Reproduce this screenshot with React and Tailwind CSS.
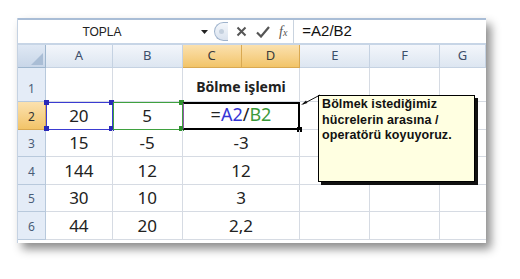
const cols = [
  { key: 'A', w: 'w-[67px]' },
  { key: 'B', w: 'w-[70px]' },
  { key: 'C', w: 'w-[59px]', sel: true },
  { key: 'D', w: 'w-[59px]', sel: true },
  { key: 'E', w: 'w-[70px]' },
  { key: 'F', w: 'w-[70px]' },
  { key: 'G', w: 'w-[46px]' },
];

const rows = [
  { n: 1, h: 'h-[34px]', a: '', b: '', c: 'Bölme işlemi', head: true },
  { n: 2, h: 'h-[28px]', a: '20', b: '5', c: 'formula', sel: true },
  { n: 3, h: 'h-[27px]', a: '15', b: '-5', c: '-3' },
  { n: 4, h: 'h-[28px]', a: '144', b: '12', c: '12' },
  { n: 5, h: 'h-[27px]', a: '30', b: '10', c: '3' },
  { n: 6, h: 'h-[28px]', a: '44', b: '20', c: '2,2' },
];

const cellFont = { fontFamily: '"Noto Sans", "Open Sans", sans-serif' };

function Handle({ className }) {
  return <span className={`absolute w-[5px] h-[5px] ${className}`} />;
}

function FormulaBar() {
  return (
    <div className="flex h-[25px] bg-white border-t-2 border-[#a9bdd6] items-center">
      <div className="w-[180px] h-full flex items-center justify-center text-[12px] text-[#222] pr-[12px]" style={{ fontFamily: '"Liberation Sans", sans-serif' }}>
        TOPLA
      </div>
      <div className="w-[12px] flex justify-center">
        <svg width="7" height="4" viewBox="0 0 7 4"><path d="M0 0h7L3.5 4z" fill="#222" /></svg>
      </div>
      <div className="w-[14px] h-[19px] ml-[4px] rounded-l-full border border-r-0 border-[#9fb3cc] bg-gradient-to-b from-[#f4f7fb] to-[#d9e2ee] flex items-center pl-[4px]">
        <span className="w-[5px] h-[5px] rounded-full bg-[#c4d0de]" />
      </div>
      <div className="flex items-center gap-[9px] ml-[8px] text-[#444]">
        <svg width="11" height="11" viewBox="0 0 11 11"><path d="M1.5 1.5l8 8M9.5 1.5l-8 8" stroke="#555" strokeWidth="2" /></svg>
        <svg width="14" height="12" viewBox="0 0 14 12"><path d="M1 6.5l4 4L13 1" stroke="#555" strokeWidth="2.2" fill="none" /></svg>
        <span className="italic text-[14px] text-[#555]" style={{ fontFamily: '"Liberation Serif", serif' }}>
          f<span className="text-[10px]">x</span>
        </span>
      </div>
      <div className="w-px h-full bg-[#c9d3df] ml-[6px]" />
      <div className="pl-[8px] text-[15px] text-[#111]" style={{ fontFamily: '"Liberation Sans", sans-serif' }}>
        =A2/B2
      </div>
    </div>
  );
}

function HeaderRow() {
  return (
    <div className="flex h-[25px] border-t-2 border-[#c7d5e6]">
      <div className="w-[28px] h-full bg-gradient-to-b from-[#dfe8f4] to-[#c8d6e8] border-r border-b border-[#9eb6ce] relative">
        <svg className="absolute right-[2px] bottom-[2px]" width="12" height="12" viewBox="0 0 12 12"><path d="M12 0v12H0z" fill="#a9bdd5" /></svg>
      </div>
      {cols.map((c) => (
        <div
          key={c.key}
          className={`${c.w} h-full flex items-center justify-center text-[13px] border-r border-b ${
            c.sel
              ? 'bg-gradient-to-b from-[#fbe1ae] to-[#f2c468] border-[#d9a952] text-[#3b3b3b]'
              : 'bg-gradient-to-b from-[#f3f6fb] to-[#dde6f1] border-[#c5d2e2] text-[#3d4f6b]'
          }`}
          style={cellFont}
        >
          {c.key}
        </div>
      ))}
    </div>
  );
}

function Row({ r }) {
  return (
    <div className={`flex ${r.h}`}>
      <div
        className={`w-[28px] h-full flex items-end justify-center pb-[3px] text-[12px] border-r border-b ${
          r.sel
            ? 'bg-gradient-to-b from-[#fbe1ae] to-[#f2c468] border-[#d9a952] text-[#333]'
            : 'bg-[#e4ecf7] border-[#b8c9dc] text-[#4a5d78]'
        }`}
        style={cellFont}
      >
        {r.n}
      </div>
      <div
        className={`w-[67px] h-full relative flex items-end justify-center pb-[1px] text-[17px] text-[#222] border-r border-b border-[#d6dbe3] ${
          r.sel ? 'outline outline-1 outline-[#3b3bd1] -outline-offset-1' : ''
        }`}
        style={cellFont}
      >
        {r.a}
        {r.sel && (
          <>
            <Handle className="bg-[#2a2ab8] -left-[2px] -top-[2px]" />
            <Handle className="bg-[#2a2ab8] -right-[2px] -top-[2px]" />
            <Handle className="bg-[#2a2ab8] -left-[2px] -bottom-[2px]" />
            <Handle className="bg-[#2a2ab8] -right-[2px] -bottom-[2px]" />
          </>
        )}
      </div>
      <div
        className={`w-[70px] h-full relative flex items-end justify-center pb-[1px] text-[17px] text-[#222] border-r border-b border-[#d6dbe3] ${
          r.sel ? 'outline outline-1 outline-[#3fa13f] -outline-offset-1' : ''
        }`}
        style={cellFont}
      >
        {r.b}
        {r.sel && (
          <>
            <Handle className="bg-[#2f8f2f] -right-[2px] -top-[2px]" />
            <Handle className="bg-[#2f8f2f] -right-[2px] -bottom-[2px]" />
          </>
        )}
      </div>
      <div
        className={`w-[118px] h-full relative flex items-end justify-center text-[#222] border-r border-b ${
          r.sel ? 'border-t-2 border-b-2 border-r-2 border-l border-black border-l-[#8e5aa6] pb-0' : 'border-[#d6dbe3] pb-[1px]'
        } ${r.head ? 'text-[14px] font-bold pb-[4px]' : 'text-[17px]'}`}
        style={cellFont}
      >
        {r.c === 'formula' ? (
          <span className="text-[18px]">
            =<span className="text-[#3535d6]">A2</span>/<span className="text-[#3a9a3a]">B2</span>
          </span>
        ) : (
          r.c
        )}
        {r.sel && <Handle className="bg-black -right-[4px] -bottom-[4px]" />}
      </div>
      <div className="w-[70px] h-full border-r border-b border-[#d6dbe3]" />
      <div className="w-[70px] h-full border-r border-b border-[#d6dbe3]" />
      <div className="w-[46px] h-full border-b border-[#d6dbe3]" />
    </div>
  );
}

function Callout() {
  return (
    <>
      <svg className="absolute left-[283px] top-[76px]" width="20" height="12" viewBox="0 0 20 12">
        <path d="M19 1L2 10" stroke="#111" strokeWidth="1" />
        <path d="M0 11l5-4.5 1.5 2.5z" fill="#111" />
      </svg>
      <div
        className="absolute left-[300px] top-[77px] w-[157px] h-[87px] bg-[#ffffe1] border border-black shadow-[3px_3px_0_#111] px-[3px] pt-[1px] text-[12.5px] leading-[15.5px] font-bold text-[#111] tracking-[0.1px]"
        style={{ fontFamily: '"Liberation Sans", "DejaVu Sans", sans-serif' }}
      >
        Bölmek istediğimiz
        <br />
        hücrelerin arasına /
        <br />
        operatörü koyuyoruz.
      </div>
    </>
  );
}

export default function App() {
  return (
    <div className="w-[520px] h-[279px] bg-white pl-[17px] pt-[18px] overflow-hidden">
      <div className="w-[469px] h-[225px] bg-white relative shadow-[5px_6px_9px_rgba(0,0,0,0.45)] border-l border-[#c5d2e2]">
        <FormulaBar />
        <HeaderRow />
        {rows.map((r) => (
          <Row key={r.n} r={r} />
        ))}
        <Callout />
      </div>
    </div>
  );
}
